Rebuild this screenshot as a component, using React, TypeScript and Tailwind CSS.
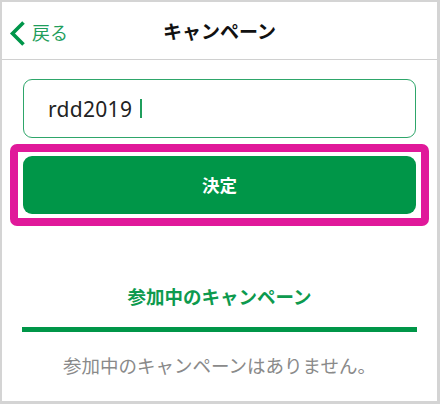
import React from 'react';

export default function App() {
  return (
    <div
      className="w-[440px] h-[404px] bg-white border-l-2 border-t-2 border-r-[3px] border-b-[3px] border-[#d4d4d4] flex flex-col"
      style={{ fontFamily: '"Noto Sans", "Noto Sans CJK JP", sans-serif' }}
    >
      <header className="relative h-[58px] border-b border-[#d0d0d0] flex items-center justify-center shrink-0">
        <button className="absolute left-[6px] top-[16px] flex items-center text-[#1f9e5c]">
          <svg width="20" height="28" viewBox="0 0 20 28" className="mt-[1px]">
            <path d="M15.5 3.5 L4.5 14.5 L15.5 25.5" fill="none" stroke="#00964a" strokeWidth="3.6" strokeLinecap="butt" strokeLinejoin="miter" />
          </svg>
          <span className="ml-[4px] text-[18px] leading-[26px]">戻る</span>
        </button>
        <h1 className="text-[19px] font-bold text-[#111] leading-[26px] mt-[2px]">キャンペーン</h1>
      </header>

      <div className="mx-[21px] mt-[19px] h-[59px] rounded-[9px] border border-[#2ea66a] flex items-center pl-[24px]">
        <span className="text-[21px] text-[#222] leading-[24px] tracking-[0.3px]">rdd2019</span>
        <span className="ml-[8px] w-[2px] h-[19px] bg-[#1f9e5c]" />
      </div>

      <div className="mx-[8px] mt-[6px] rounded-[7px] border-[8px] border-[#e0199a] px-[5px] py-[4px]">
        <button className="w-full h-[58px] rounded-[9px] bg-[#009648] text-white text-[17.5px] font-bold">
          決定
        </button>
      </div>

      <div className="mt-[58px] text-center text-[18.5px] leading-[26px] font-bold text-[#0d9a4e]">
        参加中のキャンペーン
      </div>
      <div className="mx-[20px] mt-[17px] h-[5px] bg-[#009648]" />

      <p className="mt-[22px] text-center text-[18.5px] leading-[24px] text-[#8a8a8a]">
        参加中のキャンペーンはありません。
      </p>
    </div>
  );
}
